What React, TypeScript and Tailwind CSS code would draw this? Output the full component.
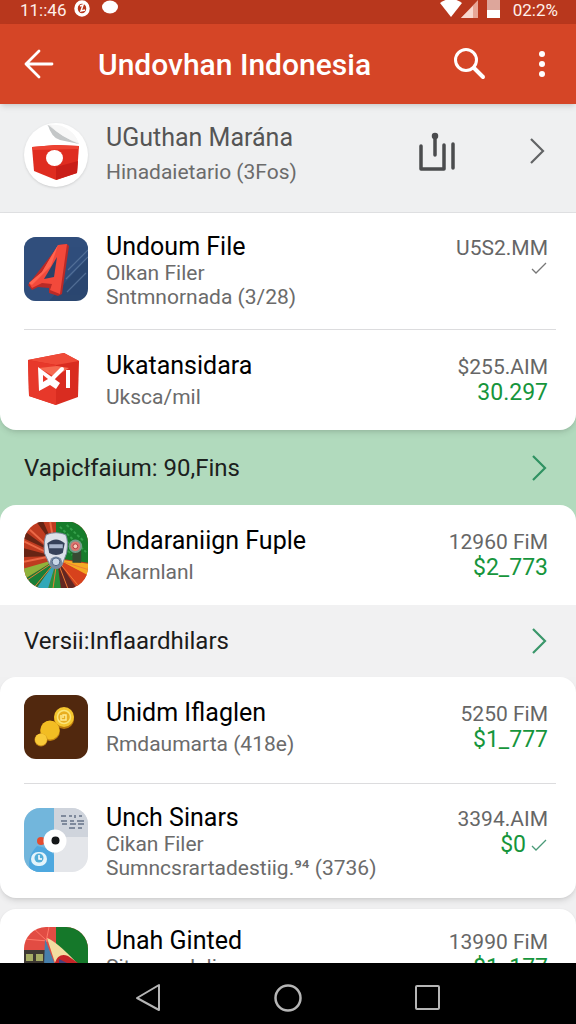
import type { ReactNode } from "react";
import { clsx } from "clsx";

type AppItem = {
  title: string;
  lines: string[];
  value: string;
  amount?: string;
  check?: "gray" | "green";
  icon: ReactNode;
  pad: string;
  tight?: boolean;
};

function CameraIcon() {
  return (
    <svg viewBox="0 0 64 64" className="size-16 shrink-0 rounded-full bg-white shadow" aria-hidden="true">
      <path d="M23 2 Q29 10 31 15 L55 21 Q51 9 38 4 Q30 1 23 2Z" fill="#eceded" />
      <path d="M24 2 Q27 14 36 17 L55 21 Q40 15 24 2Z" fill="#c4c7c8" />
      <path d="M26 2 Q36 14 55 20 Q50 8 38 3 Q31 1 26 2Z" fill="#f7f7f7" />
      <path d="M8 24 L32 22 L55 23 L53 50 L32 57 L10 48Z" fill="#df2c20" />
      <path d="M8 24 L32 22 L55 23 L54 26 L9 27Z" fill="#ed4333" />
      <path d="M32 44 L54 38 L53 50 L32 57Z" fill="#c91e18" />
      <ellipse cx="30.500" cy="35" rx="8.500" ry="8" fill="#fff" />
    </svg>
  );
}

function LetterIcon() {
  return (
    <svg viewBox="0 0 64 64" className="size-16 shrink-0 rounded-xl" aria-hidden="true">
      <rect width="64" height="64" fill="#2b4770" />
      <path d="M0 0H64V20L25 64H0Z" fill="#345483" opacity=".6" />
      <path d="M64 13L44 33M64 20L42 42M62 36L43 55" stroke="#6985aa" strokeWidth="1.200" opacity=".6" />
      <path d="M35 8 L43 7 L45 9 L38 57 L34 59 L25 56 L25 51 L14 50 L8 53 L4 48Z" fill="#b92a27" />
      <path d="M34 8 L43 7 L36 57 L26 53 L28 47 L18 46 L8 51 L5 46 L18 35Z" fill="#f2493b" />
      <path d="M33 20 L30 40 L20 42Z" fill="#294268" />
      <path d="M34 8 L27 29 L8 48 L5 46 L18 35Z" fill="#ff6450" />
    </svg>
  );
}

function BoxIcon() {
  return (
    <svg viewBox="0 0 64 64" className="size-16 shrink-0" aria-hidden="true">
      <path d="M4 12 L40 5 L55 13 L54 49 L32 57 L5 48Z" fill="#d92c20" />
      <path d="M4 12 L40 5 L55 13 L32 17Z" fill="#ef4a38" />
      <path d="M4 12 L32 17 L32 57 L5 48Z" fill="#e7382a" />
      <path d="M15 20 L33 18 L45 20 L31 29Z" fill="#f66a51" />
      <path d="M14 19L36 35L32 41L26 37L15 43Z" fill="#fff" />
      <path d="M19 27V34L24 31Z" fill="#e7382a" />
      <path d="M25 34L38 21" fill="none" stroke="#fff" strokeWidth="4" strokeLinecap="round" />
      <path d="M44 22V40" stroke="#fff" strokeWidth="4" />
    </svg>
  );
}

function BadgeIcon() {
  return (
    <svg viewBox="0 0 66 68" className="h-[68px] w-16 shrink-0 rounded-[22px]" aria-hidden="true">
      <rect width="66" height="68" fill="#bf3b20" />
      <path d="M33 0H66V42L33 37Z" fill="#167c2b" />
      <path d="M0 9L30 31L0 17M0 27L30 35L0 36M13 0L31 25L20 0" fill="#672414" />
      <path d="M0 20L29 34M0 41L29 35M6 8L29 29M27 0L32 29" stroke="#eb6846" strokeWidth="2" />
      <path d="M34 38L66 43V56Z" fill="#f5aa24" />
      <path d="M34 38L66 55V66H54Z" fill="#d7421d" />
      <path d="M34 38L54 68H37Z" fill="#632722" />
      <path d="M34 38L38 68H25Z" fill="#28913a" />
      <path d="M34 38L25 68H13Z" fill="#31a8b8" />
      <path d="M34 38L13 68H0V59Z" fill="#187e37" />
      <path d="M34 38L0 59V48Z" fill="#8fb33b" />
      <path d="M34 39L10 68M34 39L0 62M34 39L30 68M34 39L45 68M34 39L58 68M34 39L66 49" stroke="#f27d35" strokeWidth="1" />
      <path d="M37 5L64 31M44 3L62 20M37 13L55 31M38 23L50 34" stroke="#35a04b" strokeWidth="2" strokeDasharray="3 2" />
      <path d="M50 29H59V42H50Z" fill="#374a33" />
      <circle cx="53" cy="25" r="7" fill="#739d8b" />
      <circle cx="53" cy="25" r="5" fill="#db7771" />
      <circle cx="53" cy="25" r="2.500" fill="#f5cfbc" stroke="#b3383e" />
      <path d="M23 13Q33 9 43 13Q46 19 44 32L39 45Q33 49 27 45L21 32Q20 19 23 13Z" fill="#dce1e9" stroke="#7b879d" />
      <path d="M24 22Q33 14 42 22L40 32Q33 36 26 32Z" fill="#36425a" />
      <path d="M26 23H40V27H26Z" fill="#a9b6cc" />
      <circle cx="33" cy="42" r="6.500" fill="#798aa1" />
      <circle cx="33" cy="41" r="4" fill="#c9d7e7" stroke="#4c6384" />
    </svg>
  );
}

function CoinsIcon() {
  return (
    <svg viewBox="0 0 64 64" className="size-16 shrink-0 rounded-xl" aria-hidden="true">
      <rect width="64" height="64" fill="#51280e" />
      <circle cx="40" cy="24" r="10" fill="#b9780d" />
      <circle cx="40" cy="22" r="10" fill="#f4c52d" />
      <circle cx="40" cy="22" r="6.500" fill="#e8ae20" stroke="#fbe477" strokeWidth="1.500" />
      <path d="M37 20V25H42V20H39V23" fill="none" stroke="#ffeb91" strokeWidth="1.500" />
      <circle cx="26" cy="36" r="10" fill="#c18210" />
      <circle cx="26" cy="35" r="9.500" fill="#f2bd23" />
      <circle cx="17" cy="45" r="6.500" fill="#bd8115" />
      <circle cx="17" cy="44.500" r="6" fill="#f9ca38" />
    </svg>
  );
}

function BirdIcon() {
  return (
    <svg viewBox="0 0 64 64" className="size-16 shrink-0 rounded-2xl" aria-hidden="true">
      <rect width="64" height="64" fill="#e4e6ea" />
      <path d="M0 0H30V64H0Z" fill="#72b6dc" />
      <path d="M30 0H64V29H30Z" fill="#cfd4dc" />
      <path d="M13 38Q25 40 30 47V64H7Q1 51 13 38Z" fill="#4ea8df" />
      <path d="M37 8H42M45 8H48M51 7V10M55 8H58M37 13H43M46 13H50M53 13H60M38 16H43M46 16H52M54 16H60M45 20H51M54 20H58" stroke="#657286" strokeWidth="1.500" />
      <circle cx="17" cy="33" r="4" fill="#e34d30" />
      <circle cx="31" cy="33" r="11.500" fill="#fff" />
      <circle cx="31.500" cy="32.500" r="4" fill="#151719" />
      <rect x="7" y="44" width="16" height="14" rx="7" fill="#e4f4fb" />
      <circle cx="15" cy="50" r="4.500" fill="#55afd9" />
      <path d="M15 47V51H18" stroke="#fff" strokeWidth="1.500" fill="none" />
    </svg>
  );
}

function MarketIcon() {
  return (
    <svg viewBox="0 0 64 64" className="size-16 shrink-0 rounded-[22px]" aria-hidden="true">
      <rect width="64" height="64" fill="#e24c43" />
      <path d="M32 0H64V64H32Z" fill="#15782a" />
      <path d="M0 12L24 14M8 0L23 14M25 0L22 15" stroke="#ff796a" strokeWidth="1" />
      <path d="M0 23H24V64H0Z" fill="#3e3933" />
      <path d="M2 27H9V34H2ZM12 27H19V34H12Z" fill="#a6ad65" />
      <path d="M21 12L32 40H20Z" fill="#477fab" />
      <path d="M23 11Q32 14 53 36L47 48L32 39Z" fill="#f3dda0" />
      <path d="M30 39Q33 25 44 29L54 36V50H30Z" fill="#c62428" />
      <path d="M35 32L43 36L40 41H35Z" fill="#46417c" />
    </svg>
  );
}

function Chevron({ className }: { className?: string }) {
  return (
    <svg viewBox="0 0 18 30" className={clsx("h-[30px] w-[18px] shrink-0", className)} fill="none" stroke="currentColor" strokeWidth="2.200" aria-hidden="true">
      <path d="M3 3L15 15L3 27" />
    </svg>
  );
}

function Check({ className }: { className?: string }) {
  return (
    <svg viewBox="0 0 18 14" className={clsx("h-3.5 w-[18px]", className)} fill="none" stroke="currentColor" strokeWidth="1.300" aria-hidden="true">
      <path d="M2 8L6 12L16 2" />
    </svg>
  );
}

function ItemRow({ item }: { item: AppItem }) {
  // Rows with one detail line get looser spacing
  const loose = item.lines.length === 1 && !item.tight;

  return (
    <li className={clsx("flex gap-[18px] pr-2", item.pad)}>
      {item.icon}
      <div className={clsx("min-w-0 flex-1", loose && "flex flex-col gap-[5px] pt-1")}>
        <h2 className="text-[25px] leading-7 text-black">{item.title}</h2>
        {item.lines.map((line) => (
          <p key={line} className="text-[21px] leading-6 whitespace-nowrap text-[#6b6b6b]">
            {line}
          </p>
        ))}
      </div>
      <div className={clsx("shrink-0 text-right text-[21px] leading-[26px] text-[#666]", loose ? "pt-1.5" : "pt-0.5")}>
        <p>{item.value}</p>
        <p className="flex items-center justify-end gap-1 text-[23px] leading-[26px] text-[#16953c]">
          {item.amount}
          {item.check && <Check className={item.check === "gray" ? "text-[#777]" : "text-[#4a9a78]"} />}
        </p>
      </div>
    </li>
  );
}

function Card({ items, className }: { items: AppItem[]; className?: string }) {
  return (
    <ul className={clsx("relative z-10 shrink-0 divide-y divide-[#dcdcde] bg-white pr-5 pl-6", className)}>
      {items.map((item) => (
        <ItemRow key={item.title} item={item} />
      ))}
    </ul>
  );
}

const recent: AppItem[] = [
  {
    title: "Undoum File",
    lines: ["Olkan Filer", "Sntmnornada (3/28)"],
    value: "U5S2.MM",
    check: "gray",
    icon: <div className="pt-1"><LetterIcon /></div>,
    pad: "py-5",
  },
  {
    title: "Ukatansidara",
    lines: ["Uksca/mil"],
    value: "$255.AIM",
    amount: "30.297",
    icon: <BoxIcon />,
    pad: "py-[18px]",
  },
];

const featured: AppItem[] = [
  {
    title: "Undaraniign Fuple",
    lines: ["Akarnlanl"],
    value: "12960 FiM",
    amount: "$2_773",
    icon: <div className="-my-0.5"><BadgeIcon /></div>,
    pad: "py-[18px]",
  },
];

const versions: AppItem[] = [
  {
    title: "Unidm Iflaglen",
    lines: ["Rmdaumarta (418e)"],
    value: "5250 FiM",
    amount: "$1_777",
    icon: <CoinsIcon />,
    pad: "pt-[18px] pb-6",
  },
  {
    title: "Unch Sinars",
    lines: ["Cikan Filer", "Sumncsrartadestiig.⁹⁴ (3736)"],
    value: "3394.AIM",
    amount: "$0",
    check: "green",
    icon: <div className="pt-1"><BirdIcon /></div>,
    pad: "pt-5 pb-[18px]",
  },
];

const more: AppItem[] = [
  {
    title: "Unah Ginted",
    lines: ["Sitamandali"],
    value: "13990 FiM",
    amount: "$1_177",
    icon: <MarketIcon />,
    pad: "pt-[18px] pb-5",
    tight: true,
  },
];

export default function App() {
  return (
    <div className="flex h-screen flex-col overflow-hidden bg-[#f0f0f1] font-[Roboto,sans-serif]">
      {/* Status bar */}
      <div className="flex h-6 shrink-0 items-start justify-between bg-[#b8371d] pr-[18px] pl-5 text-[17px] leading-5 text-[#fff0ea]">
        <div className="flex items-start gap-2">
          <span>11::46</span>
          <svg viewBox="0 0 16 18" className="h-[18px] w-4" fill="none" aria-hidden="true">
            <ellipse cx="8" cy="8.500" rx="6" ry="6.500" stroke="#fff" strokeWidth="3.500" />
            <path d="M6 6L9 5L7 11L11 10" stroke="#fff" strokeWidth="1.500" />
          </svg>
          <svg viewBox="0 0 24 18" className="h-[18px] w-6" aria-hidden="true">
            <ellipse cx="12" cy="7" rx="8" ry="6.500" fill="#fff" />
          </svg>
        </div>
        <div className="flex items-start gap-3">
          <svg viewBox="0 0 62 18" className="h-[18px] w-[62px]" aria-hidden="true">
            <path d="M1 3Q12 -5 23 3L12 17Z" fill="#fff" />
            <path d="M22 18L39 0V18Z" fill="#e8a696" />
            <path d="M22 18L34 6V18Z" fill="#f8d8cf" />
            <path d="M48 0H61V18H48Z" fill="#dda69b" />
            <path d="M48 10H61V18H48Z" fill="#fff" />
          </svg>
          <span>02:2%</span>
        </div>
      </div>

      <header className="relative z-20 flex h-20 shrink-0 items-center bg-[#d54526] pr-4 pl-5 text-white shadow-md">
        <button aria-label="Back" className="mr-10">
          <svg viewBox="0 0 38 38" className="size-[38px]" fill="none" stroke="currentColor" strokeWidth="2.800" strokeLinecap="round" strokeLinejoin="round" aria-hidden="true">
            <path d="M32 19H6M19 6L6 19L19 32" />
          </svg>
        </button>
        <h1 className="flex-1 text-[30px] font-medium">Undovhan Indonesia</h1>
        <button aria-label="Search" className="mr-9">
          <svg viewBox="0 0 38 38" className="size-[38px]" fill="none" stroke="currentColor" strokeWidth="3" strokeLinecap="round" aria-hidden="true">
            <circle cx="16" cy="15" r="10.500" />
            <path d="M24 23L33 32" strokeWidth="4" />
          </svg>
        </button>
        <button aria-label="More options" className="flex w-9 flex-col items-center gap-1">
          <span className="size-1.5 rounded-full bg-white" />
          <span className="size-1.5 rounded-full bg-white" />
          <span className="size-1.5 rounded-full bg-white" />
        </button>
      </header>

      <main className="flex min-h-0 flex-1 flex-col overflow-hidden">
        <section className="flex shrink-0 items-center gap-[18px] border-b border-[#dfe0e2] bg-[#eff0f1] pt-[18px] pr-[30px] pb-5 pl-6">
          <div className="pb-1"><CameraIcon /></div>
          <div className="flex-1 pb-1">
            <h2 className="text-[25px] leading-8 text-[#555]">UGuthan Marána</h2>
            <p className="pt-0.5 text-[21px] leading-8 text-[#6b6b6b]">Hinadaietario (3Fos)</p>
          </div>
          <button aria-label="Share" className="mr-[52px] pb-2.5 text-[#4b4c4e]">
            <svg viewBox="0 0 40 40" className="size-10" fill="none" stroke="currentColor" strokeWidth="3.500" strokeLinecap="round" strokeLinejoin="round" aria-hidden="true">
              <path d="M3 14V37H26V13" />
              <path d="M17 4V23M35 12V36" />
              <circle cx="17" cy="4" r="1.500" />
            </svg>
          </button>
          <button aria-label="Open" className="pb-3 text-[#626466]">
            <Chevron />
          </button>
        </section>

        <Card items={recent} className="rounded-b-2xl shadow-md" />

        <a href="#fins" className="-my-4 flex h-[107px] shrink-0 items-center justify-between bg-[#b1dabd] pr-7 pl-6 text-2xl text-[#1c211d]">
          Vapicłfaium: 90,Fins
          <Chevron className="text-[#2f9262]" />
        </a>

        <Card items={featured} className="rounded-t-2xl" />

        <a href="#versions" className="flex h-[72px] shrink-0 items-center justify-between bg-[#f1f1f2] pr-7 pl-6 text-2xl text-[#1b1b1b]">
          Versii:Inflaardhilars
          <Chevron className="text-[#3b976b]" />
        </a>

        <Card items={versions} className="rounded-2xl shadow-md" />
        <Card items={more} className="mt-[11px] rounded-t-2xl shadow" />
      </main>

      <nav className="relative z-20 flex h-[61px] shrink-0 items-center justify-center gap-[104px] bg-black pt-2 text-[#b5b5b5]">
        <button aria-label="Go back">
          <svg viewBox="0 0 36 36" className="size-9" fill="none" stroke="currentColor" strokeWidth="2" strokeLinejoin="round" aria-hidden="true">
            <path d="M29 5V30L7 18Z" />
          </svg>
        </button>
        <button aria-label="Home">
          <svg viewBox="0 0 36 36" className="size-9" fill="none" stroke="currentColor" strokeWidth="2.500" aria-hidden="true">
            <circle cx="18" cy="18" r="12.500" />
          </svg>
        </button>
        <button aria-label="Recent apps">
          <svg viewBox="0 0 36 36" className="size-9" fill="none" stroke="currentColor" strokeWidth="2" aria-hidden="true">
            <rect x="6" y="6" width="23" height="23" rx="1" />
          </svg>
        </button>
      </nav>
    </div>
  );
}
